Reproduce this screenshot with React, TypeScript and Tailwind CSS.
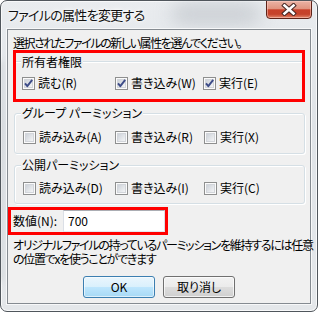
import React from "react";

function Check({ checked }: { checked: boolean }) {
  return (
    <svg width="13" height="13" viewBox="0 0 13 13" className="shrink-0 block">
      <defs>
        <linearGradient id="cbg" x1="0" y1="0" x2="1" y2="1">
          <stop offset="0" stopColor="#cbd0d7" />
          <stop offset="1" stopColor="#f6f7f8" />
        </linearGradient>
      </defs>
      <rect x="0.5" y="0.5" width="12" height="12" fill="#fbfbfb" stroke="#8e8f8f" />
      <rect x="2.5" y="2.5" width="8" height="8" fill="url(#cbg)" stroke="#d2d5da" />
      {checked && (
        <path d="M3 6.3 L5.3 9.2 L10.2 2.8" fill="none" stroke="#3d4c88" strokeWidth="1.9" strokeLinejoin="round" />
      )}
    </svg>
  );
}

function Item({ w, checked, label }: { w: string; checked: boolean; label: string }) {
  return (
    <div className={`flex items-center h-4 ${w}`}>
      <Check checked={checked} />
      <span className="ml-[3px] whitespace-nowrap">{label}</span>
    </div>
  );
}

function Row({ checked, labels, first }: { checked: boolean; labels: string[]; first?: boolean }) {
  return (
    <div className="flex items-center">
      <Item w={first ? "w-[93px]" : "w-[92px]"} checked={checked} label={labels[0]} />
      <Item w={first ? "w-[88px]" : "w-[89px]"} checked={checked} label={labels[1]} />
      <Item w="flex-1" checked={checked} label={labels[2]} />
    </div>
  );
}

function Group({ title, labels, mt, pb }: { title: string; labels: string[]; mt: string; pb: string }) {
  return (
    <fieldset
      className={`ml-[6px] w-[291px] border border-[#d5dfe5] rounded-[3px] pl-[6px] pr-0 pt-0 ${pb} shadow-[inset_1px_1px_0_#ffffff,1px_1px_0_#ffffff] mt-[3px]`}
    >
      <legend className="px-[1px] h-4 leading-4 bg-[#f0f0f0] whitespace-nowrap">{title}</legend>
      <div className={`ml-[2px] ${mt}`}>
        <Row checked={false} labels={labels} />
      </div>
    </fieldset>
  );
}

export default function App() {
  return (
    <div className="w-[318px] h-[312px] relative overflow-hidden rounded-[7px] border border-[#50565c] bg-[linear-gradient(180deg,#e9ecef,#dfe3e7_40%,#e4e7ea)] font-['Noto_Sans_CJK_JP',sans-serif] [font-feature-settings:'palt'] text-[12px] text-black shadow-[inset_0_0_0_1px_#f8f9fa]">
      {/* glass blur blobs */}
      <div className="absolute left-[170px] top-[2px] w-[90px] h-[22px] rounded-full bg-[#b9bec4] blur-[9px] opacity-60" />
      <div className="absolute left-[-6px] top-[60px] w-[8px] h-[220px] bg-[#c4c8cc] blur-[3px] opacity-50" />

      {/* title bar */}
      <div className="relative h-[28px] flex items-center pl-[7px]">
        <span className="text-[13px] tracking-[-0.7px] text-[#101010] [text-shadow:0_0_6px_#ffffff,0_0_3px_#ffffff] whitespace-nowrap">
          ファイルの属性を変更する
        </span>
      </div>

      {/* close button */}
      <div className="absolute top-[-1px] right-[5px] w-[46px] h-[19px] rounded-b-[4px] border border-[#5e2318] bg-[linear-gradient(180deg,#eab3a5,#e09480_45%,#c8412a_52%,#c5432b_78%,#e2886c)] shadow-[inset_0_0_0_1px_rgba(255,210,200,0.5)] flex items-center justify-center">
        <svg width="16" height="13" viewBox="0 0 16 13">
          <path d="M3.5 2.5 L12.5 10.5 M12.5 2.5 L3.5 10.5" stroke="#4a2a26" strokeWidth="4.6" strokeLinecap="square" />
          <path d="M3.5 2.5 L12.5 10.5 M12.5 2.5 L3.5 10.5" stroke="#ffffff" strokeWidth="2.6" strokeLinecap="square" />
        </svg>
      </div>

      {/* client area */}
      <div className="relative ml-[6px] w-[304px] h-[275px] border border-[#858b91] bg-[#f0f0f0] shadow-[0_0_0_1px_#f7f8f9] flex flex-col">
        <div className="mt-[5px] ml-[5px] h-[15px] leading-[15px] whitespace-nowrap tracking-[-1.4px]">
          選択されたファイルの新しい属性を選んでください。
        </div>

        {/* owner group in red box */}
        <div className="ml-[5px] w-[292px] h-[52px] border-[3px] border-[#ff0000] flex flex-col">
          <div className="flex items-center h-4 mt-[1px]">
            <div className="w-[5px] h-[2px] border-t border-[#d5dfe5] border-b border-b-white" />
            <span className="px-[1px] leading-4 whitespace-nowrap">所有者権限</span>
            <div className="flex-1 h-[2px] border-t border-[#d5dfe5] border-b border-b-white" />
          </div>
          <div className="mt-[5px] pl-[6px]">
            <Row first checked={true} labels={["読む(R)", "書き込み(W)", "実行(E)"]} />
          </div>
        </div>

        <Group title="グループ パーミッション" labels={["読み込み(A)", "書き込み(R)", "実行(X)"]} mt="mt-[8px]" pb="pb-[8px]" />
        <Group title="公開パーミッション" labels={["読み込み(D)", "書き込み(I)", "実行(C)"]} mt="mt-[7px]" pb="pb-[7px]" />

        {/* numeric value */}
        <div className="mt-[3px] w-[160px] h-[28px] border-[3px] border-[#ff0000] flex items-stretch">
          <div className="w-[52px] pl-[2px] flex items-center whitespace-nowrap">数値(N):</div>
          <div className="w-[102px] border border-[#abadb3] border-l-[#dbdfe6] border-r-[#dbdfe6] border-b-[#e3e9ef] bg-white flex items-center pl-[4px]">
            700
          </div>
        </div>

        <div className="mt-[3px] ml-[5px] leading-[14px] whitespace-nowrap tracking-[-1.3px]">
          オリジナルファイルの持っているパーミッションを維持するには任意
          <br />
          の位置でxを使うことができます
        </div>

        <div className="mt-[10px] flex justify-center gap-2">
          <button className="w-[72px] h-[22px] rounded-[3px] border border-[#3c7fb1] bg-[linear-gradient(180deg,#eaf6fd,#d9f0fc_50%,#bee6fd_50%,#a7d9f5)] shadow-[inset_0_0_0_1px_rgba(255,255,255,0.6)] flex items-center justify-center leading-none">
            OK
          </button>
          <button className="w-[72px] h-[22px] rounded-[3px] border border-[#707070] bg-[linear-gradient(180deg,#f2f2f2,#ebebeb_50%,#dddddd_50%,#cfcfcf)] shadow-[inset_0_0_0_1px_rgba(255,255,255,0.7)] flex items-center justify-center leading-none">
            取り消し
          </button>
        </div>
      </div>
    </div>
  );
}
